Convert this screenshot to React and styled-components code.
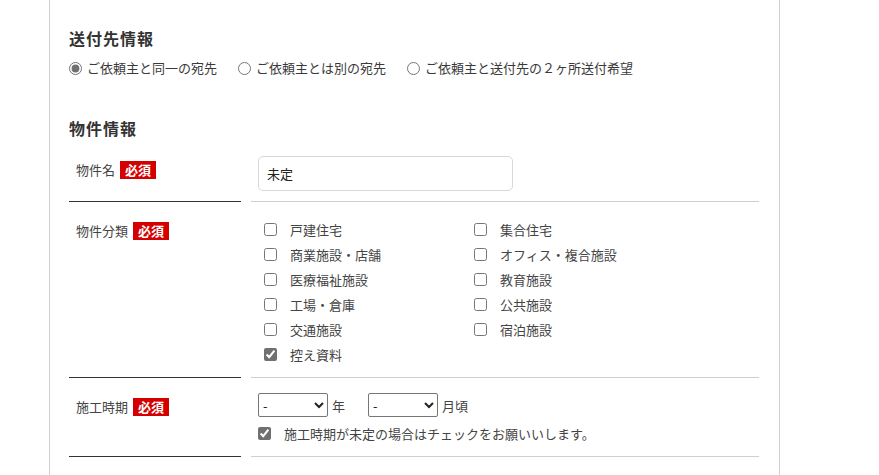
import React from "react";
import styled, { createGlobalStyle } from "styled-components";

const GlobalStyle = createGlobalStyle`
  html, body {
    margin: 0;
    padding: 0;
    background: #fff;
  }
  body {
    font-family: "Noto Sans CJK JP", "Noto Sans", sans-serif;
    color: #333;
    font-size: 13px;
  }
`;

const categories = [
  ["戸建住宅", false],
  ["集合住宅", false],
  ["商業施設・店舗", false],
  ["オフィス・複合施設", false],
  ["医療福祉施設", false],
  ["教育施設", false],
  ["工場・倉庫", false],
  ["公共施設", false],
  ["交通施設", false],
  ["宿泊施設", false],
  ["控え資料", true],
];

const destinations = [
  "ご依頼主と同一の宛先",
  "ご依頼主とは別の宛先",
  "ご依頼主と送付先の２ヶ所送付希望",
];

export default function App() {
  return (
    <>
      <GlobalStyle />
      <Panel>
        <SectionTitle>送付先情報</SectionTitle>
        <RadioRow>
          {destinations.map((text, i) => (
            <RadioLabel key={text}>
              <input type="radio" name="dest" defaultChecked={i === 0} />
              {text}
            </RadioLabel>
          ))}
        </RadioRow>

        <SectionTitle $top={40}>物件情報</SectionTitle>
        <Table>
          <Row>
            <LabelCell>
              物件名<Required>必須</Required>
            </LabelCell>
            <FieldCell>
              <TextInput defaultValue="未定" />
            </FieldCell>
          </Row>
          <Row>
            <LabelCell>
              物件分類<Required>必須</Required>
            </LabelCell>
            <FieldCell>
              <CheckGrid>
                {categories.map(([name, checked]) => (
                  <CheckLabel key={name} $indent={6}>
                    <input type="checkbox" defaultChecked={checked} />
                    <span>{name}</span>
                  </CheckLabel>
                ))}
              </CheckGrid>
            </FieldCell>
          </Row>
          <Row>
            <LabelCell>
              施工時期<Required>必須</Required>
            </LabelCell>
            <FieldCell>
              <DateLine>
                <Select defaultValue="-">
                  <option>-</option>
                </Select>
                <Unit>年</Unit>
                <Select defaultValue="-">
                  <option>-</option>
                </Select>
                <Unit>月頃</Unit>
              </DateLine>
              <CheckLabel $indent={0}>
                <input type="checkbox" defaultChecked />
                <span>施工時期が未定の場合はチェックをお願いいします。</span>
              </CheckLabel>
            </FieldCell>
          </Row>
        </Table>
      </Panel>
    </>
  );
}

const Panel = styled.div`
  box-sizing: border-box;
  margin-left: 49px;
  width: 731px;
  min-height: 100vh;
  border-left: 1px solid #d0d0d0;
  border-right: 1px solid #d0d0d0;
  padding: 28px 20px 0 19px;
  accent-color: #707070;
`;

const SectionTitle = styled.h2`
  margin: ${(p) => p.$top || 0}px 0 0;
  font-size: 16px;
  font-weight: 700;
  letter-spacing: 1px;
  line-height: 20px;
  color: #333;
`;

const RadioRow = styled.div`
  display: flex;
  gap: 21px;
  margin-top: 10px;
  line-height: 20px;
`;

const RadioLabel = styled.label`
  display: flex;
  align-items: center;
  gap: 5px;
  font-size: 13px;
  color: #3a3a3a;
  input {
    margin: 0;
    width: 13px;
    height: 13px;
  }
`;

const Table = styled.div`
  margin-top: 3px;
`;

const Row = styled.div`
  display: grid;
  grid-template-columns: 172px 508px;
  column-gap: 10px;
`;

const LabelCell = styled.div`
  display: flex;
  align-items: flex-start;
  gap: 5px;
  padding: 20px 0 0 7px;
  border-bottom: 1px solid #333;
  font-size: 13px;
  line-height: 18px;
  color: #444;
`;

const Required = styled.span`
  display: inline-block;
  background: #d40000;
  color: #fff;
  font-size: 13px;
  font-weight: 700;
  line-height: 18px;
  padding: 0 5px;
`;

const FieldCell = styled.div`
  padding: 15px 0 10px 7px;
  border-bottom: 1px solid #cfcfcf;
`;

const TextInput = styled.input`
  box-sizing: border-box;
  width: 255px;
  height: 35px;
  border: 1px solid #d8d8d8;
  border-radius: 5px;
  padding: 0 8px;
  font-family: inherit;
  font-size: 13px;
  color: #222;
  outline: none;
`;

const CheckGrid = styled.div`
  display: grid;
  grid-template-columns: 210px 210px;
`;

const CheckLabel = styled.label`
  display: flex;
  align-items: center;
  height: 25px;
  padding-left: ${(p) => p.$indent}px;
  font-size: 13px;
  color: #444;
  input {
    margin: 0 13px 0 0;
    width: 13px;
    height: 13px;
  }
`;

const DateLine = styled.div`
  display: flex;
  align-items: center;
  height: 24px;
  margin-bottom: 4px;
`;

const Select = styled.select`
  box-sizing: border-box;
  width: 70px;
  height: 24px;
  font-family: inherit;
  font-size: 13px;
  color: #222;
  border: 1px solid #767676;
  border-radius: 2px;
  background: #fff;
`;

const Unit = styled.span`
  margin: 0 23px 0 4px;
  font-size: 13px;
  color: #444;
`;
